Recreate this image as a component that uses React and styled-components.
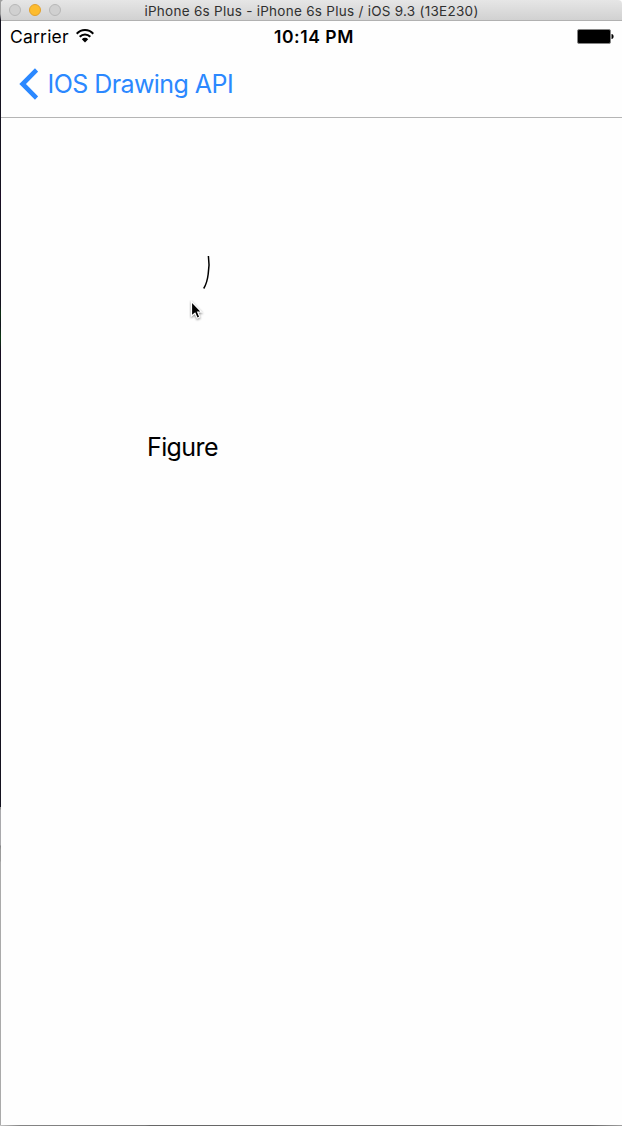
import React from "react";
import styled, { createGlobalStyle } from "styled-components";

const GlobalStyle = createGlobalStyle`
  * { box-sizing: border-box; }
  body { margin: 0; background: #fff; font-family: Inter, "Liberation Sans", sans-serif; }
`;

const Desktop = styled.div`
  width: 622px;
  height: 1126px;
  padding: 0 0 1px 1px;
  overflow: hidden;
  background:
    linear-gradient(90deg, #c4c4c4 0, #858585 20px, #777 145px, #676767 150px, #676767 590px, #a0a0a0 622px) 0 100% / 100% 1px no-repeat,
    linear-gradient(#a0a0a0 0 14px, #14121f 20px 187px, #1e0a28 195px, #14121f 210px 305px, #0a3010 313px, #14121f 325px, #0a3a10 337px, #180a22 352px, #14121f 370px 807px, #8c8c8c 807px 809px, #a9a9ac 810px 845px, #858585 846px, #9b9b9b 850px 861px, #aaa 862px);
`;

const Window = styled.div`
  height: 100%;
  display: flex;
  flex-direction: column;
  background: #fefefe;
  border-top-left-radius: 4px;
`;

const TitleBar = styled.header`
  height: 21px;
  flex: none;
  display: grid;
  grid-template-columns: 62px 1fr 62px;
  align-items: center;
  border-bottom: 1px solid #b1b1b1;
  border-radius: 4px 4px 0 0;
  background: linear-gradient(#e6e6e6, #d1d1d1);
`;

const Lights = styled.div`
  display: flex;
  gap: 8px;
  padding-left: 8px;
`;

const Light = styled.span`
  width: 12px;
  height: 12px;
  border-radius: 50%;
  background: ${(p) => (p.$active ? "#fdbc2e" : "#d0d0d0")};
  border: 1px solid ${(p) => (p.$active ? "#e2a02c" : "#b7b7b7")};
`;

const WindowTitle = styled.h1`
  margin: 0;
  padding-top: 1px;
  text-align: center;
  white-space: nowrap;
  font-size: 13.5px;
  line-height: 18px;
  font-weight: 400;
  letter-spacing: 0.27px;
  color: #303030;
`;

const StatusBar = styled.div`
  height: 31px;
  flex: none;
  display: grid;
  grid-template-columns: 1fr auto 1fr;
  align-items: center;
  padding: 0 8px 0 9px;
  color: #000;
`;

const Carrier = styled.div`
  display: flex;
  align-items: center;
  gap: 7px;
  font-size: 17.5px;
  line-height: 31px;
  letter-spacing: 0.2px;
`;

const WifiIcon = styled.svg`
  margin-top: -2px;
`;

const Clock = styled.time`
  font-size: 17.5px;
  line-height: 31px;
  font-weight: 600;
  letter-spacing: 0.55px;
  margin-left: 4px;
`;

const Battery = styled.div`
  justify-self: end;
  display: flex;
`;

const NavBar = styled.nav`
  height: 66px;
  flex: none;
  display: flex;
  align-items: center;
  padding: 0 0 1px 18px;
  border-bottom: 1px solid #b5b5b5;
`;

const BackButton = styled.button`
  display: flex;
  align-items: center;
  gap: 9.5px;
  padding: 0;
  border: 0;
  background: none;
  color: #2b88ff;
  font: 400 25px/32px Inter, "Liberation Sans", sans-serif;
  letter-spacing: -0.56px;
  white-space: nowrap;
`;

const Canvas = styled.main`
  position: relative;
  flex: 1;
`;

const Stroke = styled.svg`
  position: absolute;
  left: 199px;
  top: 134px;
`;

const Cursor = styled.svg`
  position: absolute;
  left: 188px;
  top: 182px;
`;

const FigureLabel = styled.p`
  position: absolute;
  left: 146px;
  top: 313px;
  margin: 0;
  font-size: 25px;
  line-height: 32px;
  letter-spacing: -0.6px;
  color: #000;
`;

export default function App() {
  return (
    <>
      <GlobalStyle />
      <Desktop>
        <Window>
          <TitleBar>
            <Lights>
              <Light />
              <Light $active />
              <Light />
            </Lights>
            <WindowTitle>iPhone 6s Plus - iPhone 6s Plus / iOS 9.3 (13E230)</WindowTitle>
          </TitleBar>
          <StatusBar>
            <Carrier>
              Carrier
              <WifiIcon width="18" height="14" viewBox="0 0 18 14" fill="none" stroke="#000" strokeWidth="2">
                <path d="M0.7 4.7C5.3-.2 12.7-.2 17.3 4.7" />
                <path d="M3.7 7.8C6.7 4.6 11.3 4.6 14.3 7.8" />
                <path d="M5.8 10.2C7.6 8.4 10.4 8.4 12.2 10.2L9 13.4Z" fill="#000" stroke="none" />
              </WifiIcon>
            </Carrier>
            <Clock>10:14 PM</Clock>
            <Battery>
              <svg width="37" height="15" viewBox="0 0 37 15">
                <rect x="0.5" y="0.5" width="33" height="14" rx="1.5" fill="#000" stroke="#858585" />
                <path d="M34.5 5C37.3 5 37.3 10 34.5 10Z" fill="#000" />
              </svg>
            </Battery>
          </StatusBar>
          <NavBar>
            <BackButton>
              <svg width="19" height="32" viewBox="0 0 19 32" fill="none" stroke="currentColor" strokeWidth="4.6">
                <path d="M17.6 2L3.6 16L17.6 30" />
              </svg>
              IOS Drawing API
            </BackButton>
          </NavBar>
          <Canvas>
            <Stroke width="16" height="42" viewBox="0 0 16 42" fill="none" stroke="#000" strokeWidth="1.5">
              <path d="M8.4 4C9.3 10 9.3 16 8.2 22C7.5 28 6.5 32 3.7 36.5" />
            </Stroke>
            <Cursor width="16" height="22" viewBox="0 0 16 22">
              <path d="M2.5 1.5V16L6 13.3L8.2 18.2L10.8 17L8.7 12.2H12.6Z" fill="#000" stroke="#fff" strokeWidth="1.2" style={{ filter: "drop-shadow(0 1px 1px #0007)" }} />
            </Cursor>
            <FigureLabel>Figure</FigureLabel>
          </Canvas>
        </Window>
      </Desktop>
    </>
  );
}
